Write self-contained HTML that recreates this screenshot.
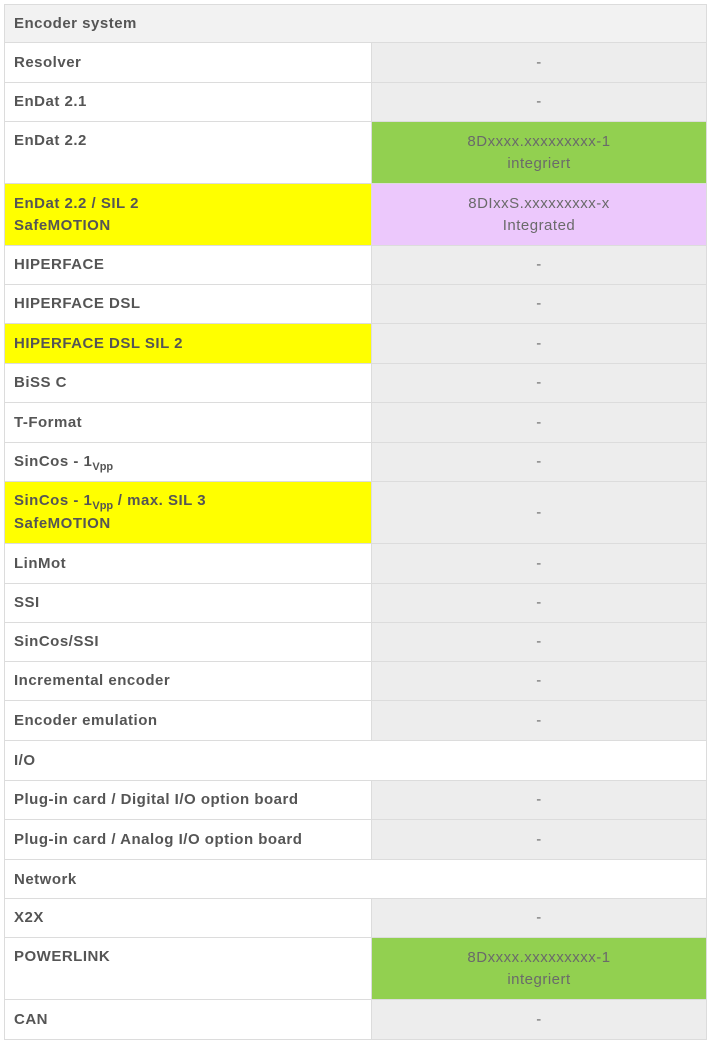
<!DOCTYPE html>
<html><head><style>
body{margin:0;background:#fff;font-family:"Liberation Sans",sans-serif;}
.r{position:absolute;left:4px;width:703px;border:1px solid #dcdcdc;box-sizing:border-box;display:flex;}
.l{width:367px;border-right:1px solid #dcdcdc;padding:0 9px;box-sizing:border-box;font-weight:bold;color:#555;font-size:15px;letter-spacing:0.5px;line-height:22px;display:flex;align-items:center;}
.l.t{align-items:flex-start;padding-top:8px}
.v{flex:1;background:#ededed;color:#6a6a6a;font-size:15px;letter-spacing:0.5px;line-height:22px;text-align:center;display:flex;align-items:center;justify-content:center;}
.y{background:#ffff00}.g{background:#92d050}.p{background:#ecc8fc}
.h{padding:0 9px;font-weight:bold;color:#555;font-size:15px;letter-spacing:0.5px;display:flex;align-items:center;}
.s{font-size:11px;position:relative;top:4px;letter-spacing:0}
</style></head><body>
<div class="r" style="top:4px;height:39px;background:#f2f2f2"><div class="h">Encoder system</div></div>
<div class="r" style="top:42px;height:41px"><div class="l">Resolver</div><div class="v">-</div></div>
<div class="r" style="top:82px;height:40px"><div class="l">EnDat 2.1</div><div class="v">-</div></div>
<div class="r" style="top:121px;height:63px"><div class="l t">EnDat 2.2</div><div class="v g"><span>8Dxxxx.xxxxxxxxx-1<br>integriert</span></div></div>
<div class="r" style="top:183px;height:63px"><div class="l y"><span>EnDat 2.2 / SIL 2<br>SafeMOTION</span></div><div class="v p"><span>8DIxxS.xxxxxxxxx-x<br>Integrated</span></div></div>
<div class="r" style="top:245px;height:40px"><div class="l">HIPERFACE</div><div class="v">-</div></div>
<div class="r" style="top:284px;height:40px"><div class="l">HIPERFACE DSL</div><div class="v">-</div></div>
<div class="r" style="top:323px;height:41px"><div class="l y">HIPERFACE DSL SIL 2</div><div class="v">-</div></div>
<div class="r" style="top:363px;height:40px"><div class="l">BiSS C</div><div class="v">-</div></div>
<div class="r" style="top:402px;height:41px"><div class="l">T-Format</div><div class="v">-</div></div>
<div class="r" style="top:442px;height:40px"><div class="l"><span>SinCos - 1<span class="s">Vpp</span></span></div><div class="v">-</div></div>
<div class="r" style="top:481px;height:63px"><div class="l y"><span>SinCos - 1<span class="s">Vpp</span> / max. SIL 3<br>SafeMOTION</span></div><div class="v">-</div></div>
<div class="r" style="top:543px;height:41px"><div class="l">LinMot</div><div class="v">-</div></div>
<div class="r" style="top:583px;height:40px"><div class="l">SSI</div><div class="v">-</div></div>
<div class="r" style="top:622px;height:40px"><div class="l">SinCos/SSI</div><div class="v">-</div></div>
<div class="r" style="top:661px;height:40px"><div class="l">Incremental encoder</div><div class="v">-</div></div>
<div class="r" style="top:700px;height:41px"><div class="l">Encoder emulation</div><div class="v">-</div></div>
<div class="r" style="top:740px;height:41px"><div class="h">I/O</div></div>
<div class="r" style="top:780px;height:40px"><div class="l">Plug-in card / Digital I/O option board</div><div class="v">-</div></div>
<div class="r" style="top:819px;height:41px"><div class="l">Plug-in card / Analog I/O option board</div><div class="v">-</div></div>
<div class="r" style="top:859px;height:40px"><div class="h">Network</div></div>
<div class="r" style="top:898px;height:40px"><div class="l">X2X</div><div class="v">-</div></div>
<div class="r" style="top:937px;height:63px"><div class="l t">POWERLINK</div><div class="v g"><span>8Dxxxx.xxxxxxxxx-1<br>integriert</span></div></div>
<div class="r" style="top:999px;height:41px"><div class="l">CAN</div><div class="v">-</div></div>
</body></html>
